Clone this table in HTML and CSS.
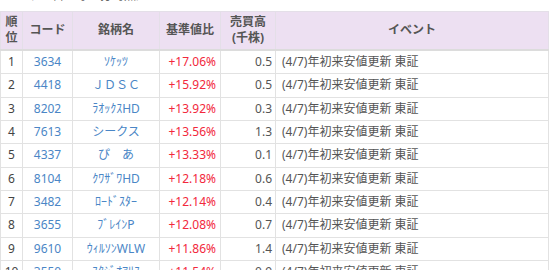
FILE: index.html
```html
<!DOCTYPE html>
<html lang="ja">
<head>
<meta charset="utf-8">
<link rel="stylesheet" href="styles.css">
</head>
<body>
<div class="caption">（4/7日 8時30分時点）</div>
<table class="rank">
  <colgroup>
    <col class="c-rank"><col class="c-code"><col class="c-name"><col class="c-pct"><col class="c-vol"><col class="c-ev">
  </colgroup>
  <thead>
    <tr>
      <th>順<br>位</th>
      <th>コード</th>
      <th>銘柄名</th>
      <th>基準値比</th>
      <th>売買高<br>(千株)</th>
      <th>イベント</th>
    </tr>
  </thead>
  <tbody>
    <tr><td class="no">1</td><td class="code">3634</td><td class="name">ｿｹｯﾂ</td><td class="pct">+17.06%</td><td class="vol">0.5</td><td class="ev">(4/7)年初来安値更新 東証</td></tr>
    <tr><td class="no">2</td><td class="code">4418</td><td class="name">ＪＤＳＣ</td><td class="pct">+15.92%</td><td class="vol">0.5</td><td class="ev">(4/7)年初来安値更新 東証</td></tr>
    <tr><td class="no">3</td><td class="code">8202</td><td class="name">ﾗｵｯｸｽHD</td><td class="pct">+13.92%</td><td class="vol">0.3</td><td class="ev">(4/7)年初来安値更新 東証</td></tr>
    <tr><td class="no">4</td><td class="code">7613</td><td class="name">シークス</td><td class="pct">+13.56%</td><td class="vol">1.3</td><td class="ev">(4/7)年初来安値更新 東証</td></tr>
    <tr><td class="no">5</td><td class="code">4337</td><td class="name">ぴ　あ</td><td class="pct">+13.33%</td><td class="vol">0.1</td><td class="ev">(4/7)年初来安値更新 東証</td></tr>
    <tr><td class="no">6</td><td class="code">8104</td><td class="name">ｸﾜｻﾞﾜHD</td><td class="pct">+12.18%</td><td class="vol">0.6</td><td class="ev">(4/7)年初来安値更新 東証</td></tr>
    <tr><td class="no">7</td><td class="code">3482</td><td class="name">ﾛｰﾄﾞｽﾀｰ</td><td class="pct">+12.14%</td><td class="vol">0.4</td><td class="ev">(4/7)年初来安値更新 東証</td></tr>
    <tr><td class="no">8</td><td class="code">3655</td><td class="name">ﾌﾞﾚｲﾝP</td><td class="pct">+12.08%</td><td class="vol">0.7</td><td class="ev">(4/7)年初来安値更新 東証</td></tr>
    <tr><td class="no">9</td><td class="code">9610</td><td class="name">ｳｨﾙｿﾝWLW</td><td class="pct">+11.86%</td><td class="vol">1.4</td><td class="ev">(4/7)年初来安値更新 東証</td></tr>
    <tr><td class="no">10</td><td class="code">3550</td><td class="name">ｽﾀｼﾞｵｱﾘｽ</td><td class="pct">+11.54%</td><td class="vol">0.9</td><td class="ev">(4/7)年初来安値更新 東証</td></tr>
  </tbody>
</table>
</body>
</html>
```
FILE: styles.css
```css
html, body {
  margin: 0;
  padding: 0;
  background: #ffffff;
}
body {
  font-family: "Noto Sans", "Noto Sans CJK JP", sans-serif;
  font-size: 12px;
  color: #444;
  overflow: hidden;
}
.caption {
  margin: -12px 0 7px 0;
  padding-left: 22px;
  line-height: 16px;
  color: #555;
}
.rank {
  border-collapse: collapse;
  table-layout: fixed;
  width: 548px;
}
.c-rank { width: 22px; }
.c-code { width: 50px; }
.c-name { width: 87px; }
.c-pct { width: 61px; }
.c-vol { width: 55px; }
.c-ev { width: 273px; }
.rank th {
  background: #ede0f2;
  color: #555;
  font-weight: bold;
  line-height: 16px;
  padding: 2px 0 3px;
  border: 1px solid #e4dfe8;
  border-bottom: 2px solid #dcdcdc;
  text-align: center;
}
.rank td {
  border: 1px solid #e2e2e2;
  padding: 2px 4px;
  line-height: 18.33px;
  white-space: nowrap;
  overflow: hidden;
}
.rank td.no { text-align: center; padding: 2px 0; color: #444; }
.rank td.code { text-align: center; color: #4a86c6; }
.rank td.name { text-align: center; color: #4a86c6; }
.rank td.pct { text-align: right; color: #f2283c; }
.rank td.vol { text-align: right; color: #555; padding-right: 3px; }
.rank td.ev { text-align: left; color: #555; padding-left: 6px; }
```
